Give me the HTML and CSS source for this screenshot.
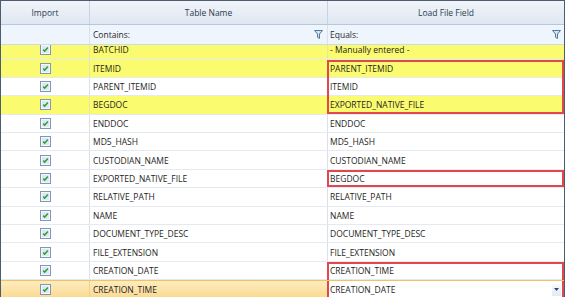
FILE: index.html
```html
<!DOCTYPE html>
<html>
<head>
<meta charset="utf-8">
<link rel="stylesheet" href="styles.css">
</head>
<body>
<div class="grid">
  <div class="row hdr">
    <div class="c imp">Import</div>
    <div class="c tn">Table Name</div>
    <div class="c lf">Load File Field</div>
  </div>
  <div class="row flt">
    <div class="c imp"></div>
    <div class="c tn"><span class="lbl">Contains:</span><svg class="funnel" width="9" height="9" viewBox="0 0 9 9"><path d="M0.5 0.5 H8.5 L5.5 4 V8.5 L3.5 7.3 V4 Z" fill="#d3e2f3" stroke="#56789f" stroke-width="1" stroke-linejoin="round"/></svg></div>
    <div class="c lf"><span class="lbl">Equals:</span><svg class="funnel" width="9" height="9" viewBox="0 0 9 9"><path d="M0.5 0.5 H8.5 L5.5 4 V8.5 L3.5 7.3 V4 Z" fill="#d3e2f3" stroke="#56789f" stroke-width="1" stroke-linejoin="round"/></svg></div>
  </div>
  <div class="body">
    <div class="row data yel first">
      <div class="c imp"><svg class="cb" width="11" height="11" viewBox="0 0 11 11"><rect x="0.5" y="0.5" width="10" height="10" fill="#f4f7fb" stroke="#7f98b7"/><rect x="2" y="2" width="7" height="7" fill="#dfe8f2"/><path d="M3.2 5.6 L4.7 7.1 L7.9 3.6" fill="none" stroke="#2f9e3a" stroke-width="1.5"/></svg></div>
      <div class="c tn">BATCHID</div>
      <div class="c lf">- Manually entered -</div>
    </div>
    <div class="row data yel">
      <div class="c imp"><svg class="cb" width="11" height="11" viewBox="0 0 11 11"><rect x="0.5" y="0.5" width="10" height="10" fill="#f4f7fb" stroke="#7f98b7"/><rect x="2" y="2" width="7" height="7" fill="#dfe8f2"/><path d="M3.2 5.6 L4.7 7.1 L7.9 3.6" fill="none" stroke="#2f9e3a" stroke-width="1.5"/></svg></div>
      <div class="c tn">ITEMID</div>
      <div class="c lf hl hl-t">PARENT_ITEMID</div>
    </div>
    <div class="row data">
      <div class="c imp"><svg class="cb" width="11" height="11" viewBox="0 0 11 11"><rect x="0.5" y="0.5" width="10" height="10" fill="#f4f7fb" stroke="#7f98b7"/><rect x="2" y="2" width="7" height="7" fill="#dfe8f2"/><path d="M3.2 5.6 L4.7 7.1 L7.9 3.6" fill="none" stroke="#2f9e3a" stroke-width="1.5"/></svg></div>
      <div class="c tn">PARENT_ITEMID</div>
      <div class="c lf hl hl-m">ITEMID</div>
    </div>
    <div class="row data yel">
      <div class="c imp"><svg class="cb" width="11" height="11" viewBox="0 0 11 11"><rect x="0.5" y="0.5" width="10" height="10" fill="#f4f7fb" stroke="#7f98b7"/><rect x="2" y="2" width="7" height="7" fill="#dfe8f2"/><path d="M3.2 5.6 L4.7 7.1 L7.9 3.6" fill="none" stroke="#2f9e3a" stroke-width="1.5"/></svg></div>
      <div class="c tn">BEGDOC</div>
      <div class="c lf hl hl-b">EXPORTED_NATIVE_FILE</div>
    </div>
    <div class="row data">
      <div class="c imp"><svg class="cb" width="11" height="11" viewBox="0 0 11 11"><rect x="0.5" y="0.5" width="10" height="10" fill="#f4f7fb" stroke="#7f98b7"/><rect x="2" y="2" width="7" height="7" fill="#dfe8f2"/><path d="M3.2 5.6 L4.7 7.1 L7.9 3.6" fill="none" stroke="#2f9e3a" stroke-width="1.5"/></svg></div>
      <div class="c tn">ENDDOC</div>
      <div class="c lf">ENDDOC</div>
    </div>
    <div class="row data">
      <div class="c imp"><svg class="cb" width="11" height="11" viewBox="0 0 11 11"><rect x="0.5" y="0.5" width="10" height="10" fill="#f4f7fb" stroke="#7f98b7"/><rect x="2" y="2" width="7" height="7" fill="#dfe8f2"/><path d="M3.2 5.6 L4.7 7.1 L7.9 3.6" fill="none" stroke="#2f9e3a" stroke-width="1.5"/></svg></div>
      <div class="c tn">MD5_HASH</div>
      <div class="c lf">MD5_HASH</div>
    </div>
    <div class="row data">
      <div class="c imp"><svg class="cb" width="11" height="11" viewBox="0 0 11 11"><rect x="0.5" y="0.5" width="10" height="10" fill="#f4f7fb" stroke="#7f98b7"/><rect x="2" y="2" width="7" height="7" fill="#dfe8f2"/><path d="M3.2 5.6 L4.7 7.1 L7.9 3.6" fill="none" stroke="#2f9e3a" stroke-width="1.5"/></svg></div>
      <div class="c tn">CUSTODIAN_NAME</div>
      <div class="c lf">CUSTODIAN_NAME</div>
    </div>
    <div class="row data">
      <div class="c imp"><svg class="cb" width="11" height="11" viewBox="0 0 11 11"><rect x="0.5" y="0.5" width="10" height="10" fill="#f4f7fb" stroke="#7f98b7"/><rect x="2" y="2" width="7" height="7" fill="#dfe8f2"/><path d="M3.2 5.6 L4.7 7.1 L7.9 3.6" fill="none" stroke="#2f9e3a" stroke-width="1.5"/></svg></div>
      <div class="c tn">EXPORTED_NATIVE_FILE</div>
      <div class="c lf hl hl-s">BEGDOC</div>
    </div>
    <div class="row data">
      <div class="c imp"><svg class="cb" width="11" height="11" viewBox="0 0 11 11"><rect x="0.5" y="0.5" width="10" height="10" fill="#f4f7fb" stroke="#7f98b7"/><rect x="2" y="2" width="7" height="7" fill="#dfe8f2"/><path d="M3.2 5.6 L4.7 7.1 L7.9 3.6" fill="none" stroke="#2f9e3a" stroke-width="1.5"/></svg></div>
      <div class="c tn">RELATIVE_PATH</div>
      <div class="c lf">RELATIVE_PATH</div>
    </div>
    <div class="row data">
      <div class="c imp"><svg class="cb" width="11" height="11" viewBox="0 0 11 11"><rect x="0.5" y="0.5" width="10" height="10" fill="#f4f7fb" stroke="#7f98b7"/><rect x="2" y="2" width="7" height="7" fill="#dfe8f2"/><path d="M3.2 5.6 L4.7 7.1 L7.9 3.6" fill="none" stroke="#2f9e3a" stroke-width="1.5"/></svg></div>
      <div class="c tn">NAME</div>
      <div class="c lf">NAME</div>
    </div>
    <div class="row data">
      <div class="c imp"><svg class="cb" width="11" height="11" viewBox="0 0 11 11"><rect x="0.5" y="0.5" width="10" height="10" fill="#f4f7fb" stroke="#7f98b7"/><rect x="2" y="2" width="7" height="7" fill="#dfe8f2"/><path d="M3.2 5.6 L4.7 7.1 L7.9 3.6" fill="none" stroke="#2f9e3a" stroke-width="1.5"/></svg></div>
      <div class="c tn">DOCUMENT_TYPE_DESC</div>
      <div class="c lf">DOCUMENT_TYPE_DESC</div>
    </div>
    <div class="row data">
      <div class="c imp"><svg class="cb" width="11" height="11" viewBox="0 0 11 11"><rect x="0.5" y="0.5" width="10" height="10" fill="#f4f7fb" stroke="#7f98b7"/><rect x="2" y="2" width="7" height="7" fill="#dfe8f2"/><path d="M3.2 5.6 L4.7 7.1 L7.9 3.6" fill="none" stroke="#2f9e3a" stroke-width="1.5"/></svg></div>
      <div class="c tn">FILE_EXTENSION</div>
      <div class="c lf">FILE_EXTENSION</div>
    </div>
    <div class="row data">
      <div class="c imp"><svg class="cb" width="11" height="11" viewBox="0 0 11 11"><rect x="0.5" y="0.5" width="10" height="10" fill="#f4f7fb" stroke="#7f98b7"/><rect x="2" y="2" width="7" height="7" fill="#dfe8f2"/><path d="M3.2 5.6 L4.7 7.1 L7.9 3.6" fill="none" stroke="#2f9e3a" stroke-width="1.5"/></svg></div>
      <div class="c tn">CREATION_DATE</div>
      <div class="c lf hl hl-t">CREATION_TIME</div>
    </div>
    <div class="row data sel">
      <div class="c imp"><svg class="cb" width="11" height="11" viewBox="0 0 11 11"><rect x="0.5" y="0.5" width="10" height="10" fill="#f4f7fb" stroke="#7f98b7"/><rect x="2" y="2" width="7" height="7" fill="#dfe8f2"/><path d="M3.2 5.6 L4.7 7.1 L7.9 3.6" fill="none" stroke="#2f9e3a" stroke-width="1.5"/></svg></div>
      <div class="c tn">CREATION_TIME</div>
      <div class="c lf hl hl-b editor"><span class="val">CREATION_DATE</span><span class="dd"><svg width="5" height="3" viewBox="0 0 5 3"><path d="M0 0 H5 L2.5 3 Z" fill="#2c4a78"/></svg></span></div>
    </div>
  </div>
</div>
</body>
</html>
```

FILE: styles.css
```css
* { box-sizing: border-box; }
html, body { margin: 0; padding: 0; background: #ffffff; }
body {
  font-family: "Open Sans", "Noto Sans", sans-serif;
  font-size: 8.5px;
  color: #1e1e1e;
}
.grid {
  width: 565px;
  height: 297px;
  border-top: 1px solid #4e5c70;
  border-left: 1px solid #4e5c70;
  border-right: 1px solid #4e5c70;
  display: flex;
  flex-direction: column;
  overflow: hidden;
}
.row {
  display: grid;
  grid-template-columns: 89px 238px 1fr;
  flex: none;
}
.c {
  display: flex;
  align-items: center;
  min-width: 0;
  white-space: nowrap;
  border-right: 1px solid #d9e2ec;
}
.c.lf { border-right: none; }

/* header */
.hdr {
  height: 24px;
  background: linear-gradient(#f1f5fa, #dfe7f1);
  border-bottom: 1px solid #b7c7d9;
  color: #2c3b50;
}
.hdr .c { justify-content: center; border-right: 1px solid #c6d4e3; }
.hdr .c.lf { border-right: none; }

/* filter row */
.flt {
  height: 20px;
  background: #eef5fc;
  border-bottom: 1px solid #cdd9e6;
  color: #2a2a2a;
}
.flt .c { padding-left: 3px; padding-right: 4px; }
.flt .c.lf { padding-left: 2px; padding-right: 3px; }
.flt .lbl { flex: 1; }
.funnel { display: block; flex: none; margin-top: -1px; }

/* body */
.body {
  flex: 1;
  overflow: hidden;
  display: flex;
  flex-direction: column;
}
.data {
  height: 18.4px;
  border-bottom: 1px solid #e4eaf1;
}
.data.first { margin-top: -3.9px; }
.data .c.imp { justify-content: center; padding-left: 1px; }
.data .c.tn { padding-left: 3px; }
.data .c.lf { padding-left: 2px; }
.cb { display: block; }
.yel { background: #fbfb6f; }
.yel .c { border-right-color: #e6e6a8; }
.yel .c.lf { border-right: none; }

/* selected row */
.sel {
  border-top: 1px solid #f0c35e;
  border-bottom: none;
}
.sel .c.imp, .sel .c.tn {
  background: linear-gradient(#fdecbf, #fbd98e);
  border-right-color: #efd08a;
}
.editor { background: #ffffff; padding-right: 3px; }
.editor .val { flex: 1; }
.dd {
  display: flex;
  align-items: center;
  justify-content: center;
  width: 9px;
  height: 12px;
  background: linear-gradient(#f6f9fc, #e4ebf4);
}
.dd svg { display: block; }

/* red highlight boxes */
.hl { position: relative; }
.hl::after {
  content: "";
  position: absolute;
  left: -1px;
  right: 0;
  top: 0;
  bottom: -1px;
  border-left: 2px solid #e2474d;
  border-right: 2px solid #e2474d;
  pointer-events: none;
}
.hl-t::after { border-top: 2px solid #e2474d; }
.hl-b::after { border-bottom: 2px solid #e2474d; bottom: 0; }
.hl-s::after { border-top: 2px solid #e2474d; border-bottom: 2px solid #e2474d; bottom: 0; }
```
